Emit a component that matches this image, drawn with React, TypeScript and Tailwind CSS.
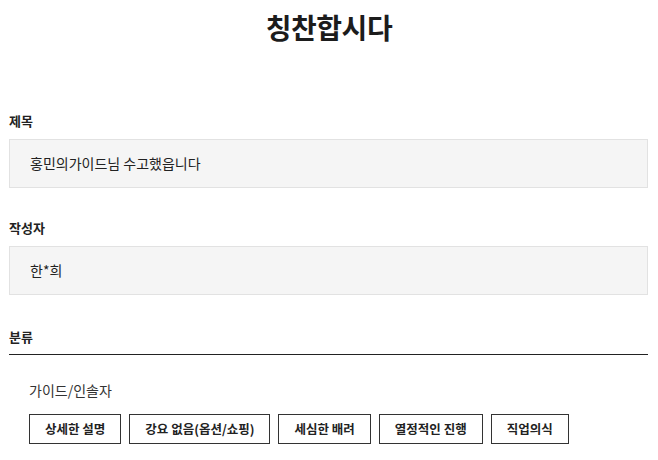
const FONT = "font-['Noto_Sans_CJK_KR','Noto_Sans',sans-serif]";

const tags = ["상세한 설명", "강요 없음(옵션/쇼핑)", "세심한 배려", "열정적인 진행", "직업의식"];

function Field({ label, value, className }: { label: string; value: string; className?: string }) {
  return (
    <div className={className}>
      <div className="text-[13px] leading-[20px] font-bold text-[#222]">{label}</div>
      <div className="mt-[8px] h-[49px] flex items-center px-[20px] bg-[#f5f5f5] border border-[#e2e2e2] text-[14px] text-[#222]">
        {value}
      </div>
    </div>
  );
}

export default function App() {
  return (
    <div className={`${FONT} bg-white w-[658px] h-[460px] overflow-hidden`}>
      <h1 className="pt-[10px] text-center text-[28px] leading-[34px] font-bold text-[#1c1c1c] tracking-[-0.5px]">
        칭찬합시다
      </h1>

      <div className="ml-[9px] mr-[10px]">
        <Field label="제목" value="홍민의가이드님 수고했읍니다" className="mt-[67px]" />
        <Field label="작성자" value="한*희" className="mt-[30px]" />

        <div className="mt-[32px] pb-[7px] border-b border-[#222] text-[13px] leading-[20px] font-bold text-[#222]">
          분류
        </div>

        <div className="pl-[20px]">
          <div className="mt-[25px] text-[14px] leading-[20px] text-[#333]">가이드/인솔자</div>
          <div className="mt-[14px] flex gap-[8px]">
            {tags.map((t) => (
              <span
                key={t}
                className="h-[30px] px-[15px] flex items-center border border-[#333] text-[12.5px] font-bold text-[#222]"
              >
                {t}
              </span>
            ))}
          </div>
        </div>
      </div>
    </div>
  );
}
